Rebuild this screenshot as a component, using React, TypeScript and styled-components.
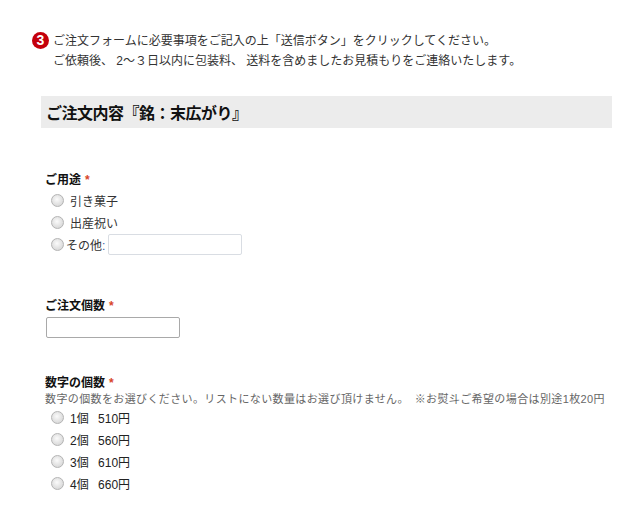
import React from "react";
import styled, { createGlobalStyle } from "styled-components";

const GlobalStyle = createGlobalStyle`
  html, body { margin: 0; padding: 0; background: #fff; }
  body {
    font-family: "Liberation Sans", "Noto Sans CJK JP", sans-serif;
    font-size: 12px;
    color: #333;
  }
`;

const Page = styled.div`
  width: 642px;
  padding: 31px 0 20px 32px;
  box-sizing: border-box;
`;

const Intro = styled.div`
  display: flex;
  align-items: flex-start;
  gap: 4px;
`;

const Badge = styled.span`
  flex: none;
  width: 17px;
  height: 17px;
  border-radius: 50%;
  background: #c4000b;
  color: #fff;
  font: bold 14px/17px "Liberation Sans", sans-serif;
  text-align: center;
  margin-top: 1px;
`;

const IntroText = styled.div`
  line-height: 20px;
  color: #333;
  font-size: 12px;
`;

const Line = styled.p`
  margin: 0;
  white-space: nowrap;
`;

const Heading = styled.h2`
  margin: 25px 30px 0 9px;
  height: 32px;
  background: #ececec;
  display: flex;
  align-items: center;
  padding-left: 5px;
  font: bold 16px "Noto Sans CJK JP", sans-serif;
  color: #111;
  letter-spacing: -0.5px;
`;

const Field = styled.div<{ $top: number }>`
  margin-top: ${(p) => p.$top}px;
  margin-left: 13px;
`;

const Label = styled.div`
  font-weight: bold;
  color: #111;
  font-size: 12px;
  line-height: 16px;
`;

const Req = styled.span`
  color: #d8452a;
  font-weight: bold;
  margin-left: 4px;
`;

const Note = styled.div`
  font-size: 11px;
  color: #666;
  line-height: 16px;
  white-space: nowrap;
  letter-spacing: 0.38px;
`;

const Options = styled.div<{ $top: number }>`
  display: flex;
  flex-direction: column;
  gap: 9px;
  margin-top: ${(p) => p.$top}px;
  padding-left: 6px;
`;

const Option = styled.label<{ $tight?: boolean }>`
  display: flex;
  align-items: center;
  height: 13px;
  gap: ${(p) => (p.$tight ? 2 : 6)}px;
  color: #333;
  font-size: 12px;
  white-space: nowrap;
`;

const Radio = styled.input.attrs({ type: "radio" })`
  appearance: none;
  margin: 0;
  width: 13px;
  height: 13px;
  border-radius: 50%;
  border: 1px solid #b4b4b4;
  box-sizing: border-box;
  background: radial-gradient(circle at 45% 40%, #fbfbfb 0%, #e6e6e6 45%, #cfcfcf 100%);
  flex: none;
`;

const Colon = styled.span`
  color: #3a5ca8;
  margin-right: 1px;
`;

const TextBox = styled.input<{ $dark?: boolean }>`
  box-sizing: border-box;
  width: 134px;
  height: 21px;
  margin: 0;
  border: 1px solid ${(p) => (p.$dark ? "#a9a9a9" : "#d9dde3")};
  border-radius: 2px;
  background: #fff;
  outline: none;
`;

const BoxRow = styled.div`
  margin-top: 3px;
  margin-left: 1px;
`;

const Price = styled.span`
  color: #222;
  word-spacing: 6px;
`;

const prices = [
  ["1個", "510円"],
  ["2個", "560円"],
  ["3個", "610円"],
  ["4個", "660円"],
];

export default function App() {
  return (
    <>
      <GlobalStyle />
      <Page>
        <Intro>
          <Badge>3</Badge>
          <IntroText>
            <Line>ご注文フォームに必要事項をご記入の上「送信ボタン」をクリックしてください。</Line>
            <Line>ご依頼後、 2～３日以内に包装料、 送料を含めましたお見積もりをご連絡いたします。</Line>
          </IntroText>
        </Intro>

        <Heading>ご注文内容『銘：末広がり』</Heading>

        <Field $top={44}>
          <Label>
            ご用途<Req>*</Req>
          </Label>
          <Options $top={6}>
            <Option>
              <Radio name="use" />
              引き菓子
            </Option>
            <Option>
              <Radio name="use" />
              出産祝い
            </Option>
            <Option $tight>
              <Radio name="use" />
              <span>
                その他<Colon>:</Colon>
              </span>
              <TextBox type="text" />
            </Option>
          </Options>
        </Field>

        <Field $top={47}>
          <Label>
            ご注文個数<Req>*</Req>
          </Label>
          <BoxRow>
            <TextBox type="text" $dark />
          </BoxRow>
        </Field>

        <Field $top={37}>
          <Label>
            数字の個数<Req>*</Req>
          </Label>
          <Note>
            数字の個数をお選びください。リストにない数量はお選び頂けません。　※お熨斗ご希望の場合は別途1枚20円
          </Note>
          <Options $top={4}>
            {prices.map(([n, p]) => (
              <Option key={n}>
                <Radio name="count" />
                <Price>
                  {n} {p}
                </Price>
              </Option>
            ))}
          </Options>
        </Field>
      </Page>
    </>
  );
}
